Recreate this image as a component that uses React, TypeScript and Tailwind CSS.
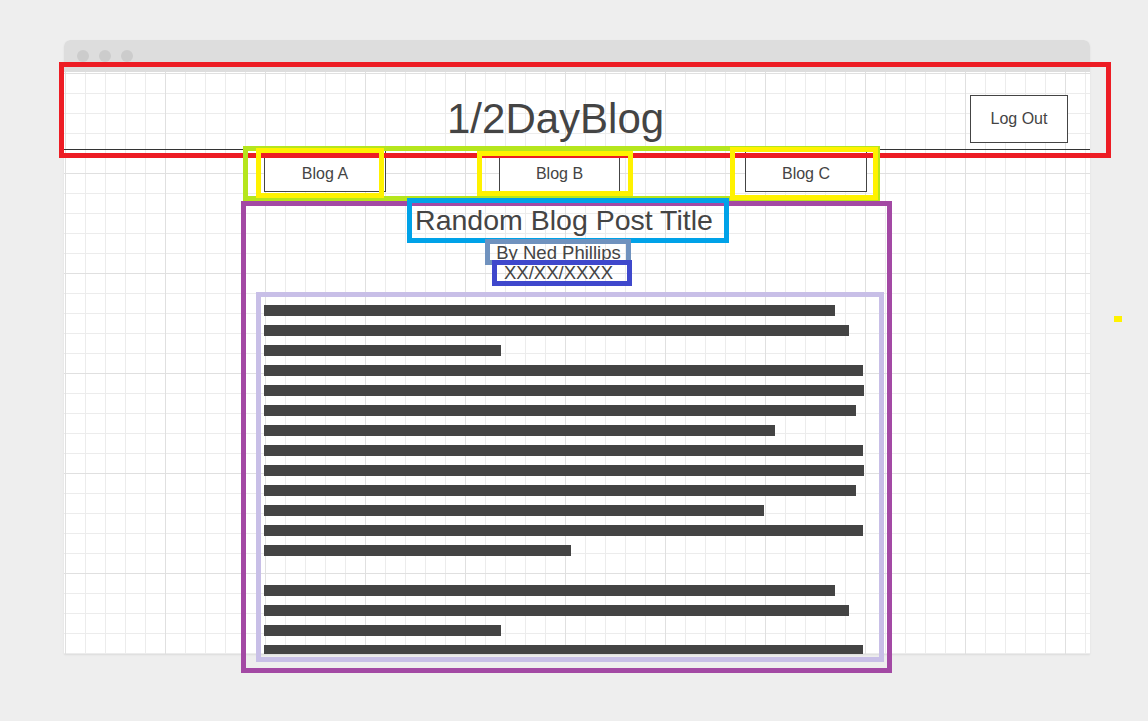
const bars = [571, 585, 237, 599, 600, 592, 511, 599, 600, 592, 500, 599, 307, 0, 571, 585, 237, 599, 600, 592, 511];

const blogs = [
  { label: 'Blog A', className: 'ml-[200px] w-[122px]' },
  { label: 'Blog B', className: 'ml-[113px] w-[121px]' },
  { label: 'Blog C', className: 'ml-[125px] w-[122px]' },
];

function Annotations() {
  return (
    <>
      <div className="absolute left-[59px] top-[62px] w-[1052px] h-[96px] border-[5px] border-[#ed1c24]" />
      <div className="absolute left-[243px] top-[146px] w-[637px] h-[55px] border-[5px] border-[#b5e61d]" />
      <div className="absolute left-[256px] top-[148px] w-[128px] h-[50px] border-[5px] border-[#fff200]" />
      <div className="absolute left-[477px] top-[151px] w-[156px] h-[45px] border-[5px] border-[#fff200]" />
      <div className="absolute left-[730px] top-[147px] w-[148px] h-[53px] border-[5px] border-[#fff200]" />
      <div className="absolute left-[241px] top-[201px] w-[651px] h-[472px] border-[5px] border-[#a349a4]" />
      <div className="absolute left-[407px] top-[198px] w-[322px] h-[45px] border-[5px] border-[#00a2e8]" />
      <div className="absolute left-[485px] top-[239px] w-[146px] h-[26px] border-[5px] border-[#7092be]" />
      <div className="absolute left-[492px] top-[260px] w-[140px] h-[26px] border-[5px] border-[#3f48cc]" />
      <div className="absolute left-[256px] top-[292px] w-[628px] h-[370px] border-[5px] border-[#c8bfe7]" />
      <div className="absolute left-[1114px] top-[316px] w-[8px] h-[6px] bg-[#fff200]" />
    </>
  );
}

export default function App() {
  return (
    <div className="relative w-[1148px] h-[721px] overflow-hidden bg-[#eeeeee] pt-[40px] pl-[64px] font-['Liberation_Sans',Arial,sans-serif] text-[#444]">
      <div className="w-[1026px] h-[614px] rounded-t-[6px] overflow-hidden bg-white shadow-[0_1px_2px_rgba(0,0,0,0.08)]">
        {/* window chrome */}
        <div className="h-[32px] bg-[#dddddd] flex items-center gap-[10px] pl-[13px]">
          <span className="w-3 h-3 rounded-full bg-[#cccccc]" />
          <span className="w-3 h-3 rounded-full bg-[#cccccc]" />
          <span className="w-3 h-3 rounded-full bg-[#cccccc]" />
        </div>

        <div className="h-[582px] overflow-hidden bg-white bg-[linear-gradient(to_right,#e0e0e0_1px,transparent_1px),linear-gradient(to_bottom,#e0e0e0_1px,transparent_1px),linear-gradient(to_right,#ececec_1px,transparent_1px),linear-gradient(to_bottom,#ececec_1px,transparent_1px)] bg-[length:100px_100px,100px_100px,20px_20px,20px_20px] bg-[position:1px_1px,1px_1px,1px_1px,1px_1px]">
          <header className="h-[78px] flex items-center pt-[17px] border-b border-[#333]">
            <h1 className="ml-[383px] text-[42px] leading-none">1/2DayBlog</h1>
            <button className="ml-auto mr-[22px] w-[98px] h-[48px] border border-[#444] bg-white text-[16px]">
              Log Out
            </button>
          </header>

          <nav className="flex">
            {blogs.map((b) => (
              <div
                key={b.label}
                className={`${b.className} h-[42px] pt-[6px] border border-t-0 border-[#444] bg-white flex items-center justify-center text-[16px]`}
              >
                {b.label}
              </div>
            ))}
          </nav>

          <article className="ml-[200px] w-[600px] flex flex-col items-center">
            <h2 className="mt-[12px] text-[28.5px] leading-[32px]">Random Blog Post Title</h2>
            <p className="mt-[7px] pr-[11px] text-[18.5px] leading-[20px]">By Ned Phillips</p>
            <p className="pr-[11px] text-[18.5px] leading-[20px]">XX/XX/XXXX</p>
            <div className="mt-[22px] self-stretch flex flex-col gap-[9px]">
              {bars.map((w, i) => (
                <div key={i} className="h-[11px] bg-[#444]" style={{ width: w }} />
              ))}
            </div>
          </article>
        </div>
      </div>

      <Annotations />
    </div>
  );
}
